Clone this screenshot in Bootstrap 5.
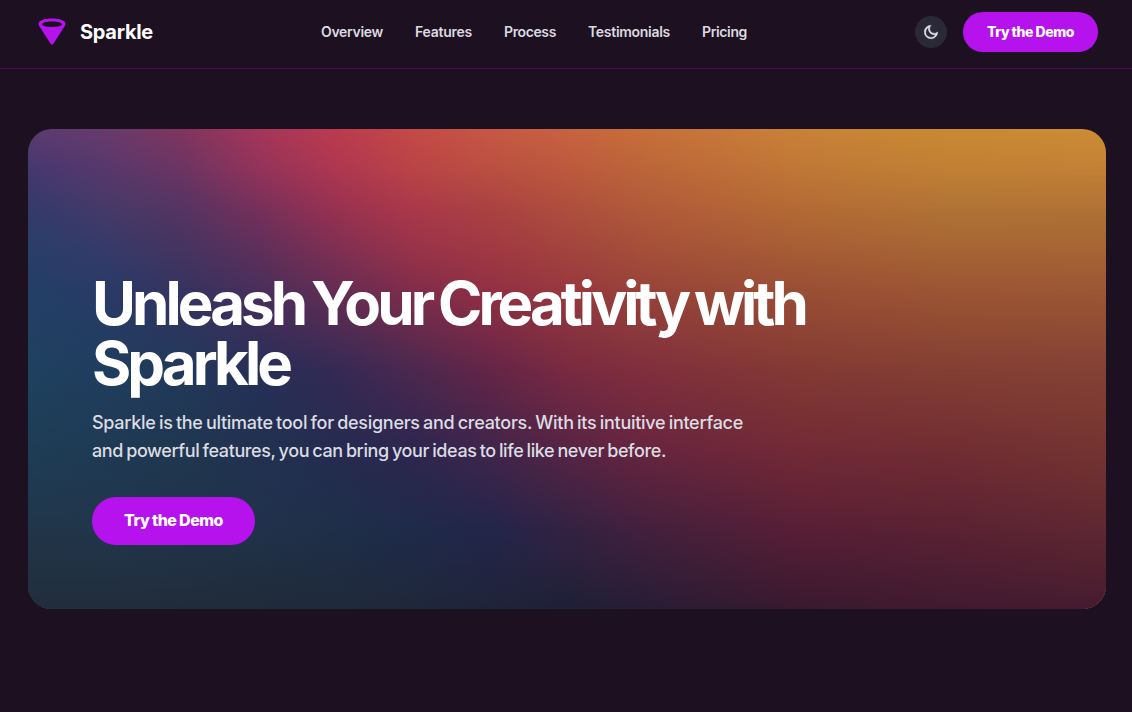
<!DOCTYPE html>
<html lang="en">
<head>
<meta charset="utf-8">
<meta name="viewport" content="width=device-width, initial-scale=1">
<title>Sparkle</title>
<link href="https://cdn.jsdelivr.net/npm/bootstrap@5.3.0/dist/css/bootstrap.min.css" rel="stylesheet">
<style>
body{background:#1d1020;color:#fff;font-family:Inter,"Open Sans",sans-serif;overflow:hidden}
.topbar{height:69px;padding:0 34px 5px 36px;border-bottom:1px solid #47104f}
.brand-name{font-size:20px;line-height:28px;font-weight:700}
.main-links{gap:32px}
.main-links a{font-size:14px;line-height:20px;font-weight:600;color:#dcdae0;text-decoration:none;white-space:nowrap}
.theme-btn{width:32px;height:32px;background:#292938;border:0;color:#e5e5ea}
.btn-demo{--bs-btn-color:#fff;--bs-btn-bg:#b612ed;--bs-btn-hover-color:#fff;--bs-btn-hover-bg:#a30fd6;--bs-btn-border-width:0;font-weight:800;word-spacing:-.3px;white-space:nowrap;display:inline-flex;align-items:center;justify-content:center;padding:0}
.btn-top{width:135px;height:40px;font-size:14px}
.btn-hero{width:163px;height:48px;font-size:16px;margin-top:32px;padding-bottom:2px}
.hero{margin:60px 26px 0 28px;height:480px;border-radius:24px;overflow:hidden;display:grid}
.hero>*{grid-area:1/1}
.hero-copy{z-index:1;padding:0 64px 64px}
h1{font-size:60px;line-height:60px;font-weight:750;word-spacing:-3.5px;width:760px}
.intro{font-size:18px;line-height:28px;font-weight:500;color:#dcdce3;word-spacing:-1.2px;white-space:nowrap}
.fit{display:inline-block;white-space:nowrap}
/* Each band fades in over the one above it, giving a smooth colour mesh. */
.band{background:linear-gradient(90deg,var(--a) 0,var(--b) 7.14%,var(--c) 14.29%,var(--d) 21.43%,var(--e) 28.57%,var(--f) 35.71%,var(--g) 42.86%,var(--h) 50%,var(--i) 57.14%,var(--j) 71.43%,var(--k) 85.71%,var(--l) 100%);-webkit-mask-image:linear-gradient(transparent var(--from),#000 var(--to));mask-image:linear-gradient(transparent var(--from),#000 var(--to))}
.band-1{--a:#5b3b72;--b:#683b6c;--c:#80355f;--d:#a5365a;--e:#bb3b4e;--f:#c44a46;--g:#c65844;--h:#c86340;--i:#c76f39;--j:#c98238;--k:#c98a33;--l:#cd8c35;-webkit-mask-image:linear-gradient(#000 20%,transparent 21%);mask-image:linear-gradient(#000 20%,transparent 21%)}
.band-1b{--from:0%;--to:8.33%;--a:#45386f;--b:#57386c;--c:#6b3562;--d:#93335a;--e:#ae3751;--f:#b94447;--g:#bb4f41;--h:#bb593e;--i:#bc653a;--j:#c07737;--k:#c08035;--l:#c28136}
.band-2{--from:8.33%;--to:16.67%;--a:#333b6b;--b:#453a68;--c:#553462;--d:#76305a;--e:#983151;--f:#aa384a;--g:#a94242;--h:#ae4e3e;--i:#b15a3a;--j:#b46a35;--k:#b07336;--l:#b07236}
.band-2b{--from:16.67%;--to:25%;--a:#293e69;--b:#353a69;--c:#453461;--d:#5f2f5a;--e:#7f2f52;--f:#98334a;--g:#a03943;--h:#a3433e;--i:#a54f3a;--j:#a75d35;--k:#a66535;--l:#a66535}
.band-3{--from:25%;--to:33.33%;--a:#233f66;--b:#2a3b66;--c:#363360;--d:#4a2f5b;--e:#662d53;--f:#812d4a;--g:#933044;--h:#98393e;--i:#98443a;--j:#9a4f35;--k:#9c5634;--l:#9c5735}
.band-4{--from:33.33%;--to:50%;--a:#1f4260;--b:#203d5f;--c:#22395b;--d:#272f58;--e:#352a55;--f:#4c284f;--g:#652547;--h:#792a41;--i:#802f3d;--j:#833a34;--k:#843f34;--l:#844135}
.band-5{--from:50%;--to:66.67%;--a:#1e3d55;--b:#1f3a54;--c:#203750;--d:#213251;--e:#252b50;--f:#2e264f;--g:#41254b;--h:#572444;--i:#68253f;--j:#732a36;--k:#712d33;--l:#753431}
.band-6{--from:66.67%;--to:83.33%;--a:#21364a;--b:#21364b;--c:#21344a;--d:#20324a;--e:#1f2f49;--f:#1f2b4a;--g:#23254a;--h:#332243;--i:#43203d;--j:#581f36;--k:#5a2233;--l:#5f2832}
.band-7{--from:83.33%;--to:100%;--a:#222d3c;--b:#222d3c;--c:#212c3b;--d:#212b3a;--e:#202a3b;--f:#1f273a;--g:#1f243a;--h:#1f2037;--i:#281d35;--j:#39192f;--k:#411a30;--l:#461b2f}
</style>
</head>
<body>
<header class="topbar d-flex align-items-center justify-content-between">
  <div class="d-flex align-items-center">
    <svg width="32" height="32" viewBox="0 0 32 32" fill="#b612ed" aria-hidden="true"><path fill-rule="evenodd" d="M16 2.6C8.3 2.6 2.5 4.7 2.5 7.7c0 .9.4 1.9 1 2.9l11.1 17.2c.7 1.1 2.1 1.1 2.8 0l11.1-17.2c.6-1 1-2 1-2.9 0-3-5.8-5.1-13.5-5.1Zm0 2.9c5.7 0 10 1.2 10 2.7s-4.3 2.7-10 2.7S6 9.7 6 8.2 10.3 5.500 16 5.500Z"/></svg>
    <span class="brand-name ms-2 ps-1"><span class="fit" data-w="73">Sparkle</span></span>
  </div>
  <nav class="main-links d-flex">
    <a href="#"><span class="fit" data-w="62">Overview</span></a>
    <a href="#"><span class="fit" data-w="57">Features</span></a>
    <a href="#"><span class="fit" data-w="52">Process</span></a>
    <a href="#"><span class="fit" data-w="82">Testimonials</span></a>
    <a href="#"><span class="fit" data-w="45">Pricing</span></a>
  </nav>
  <div class="d-flex align-items-center gap-3">
    <button class="theme-btn rounded-circle d-flex align-items-center justify-content-center p-0" aria-label="Toggle theme">
      <svg width="16" height="16" viewBox="0 0 24 24" fill="currentColor" stroke="currentColor" stroke-width=".7" aria-hidden="true"><path d="M10 7a7 7 0 0 0 12 4.900V12c0 5.523-4.477 10-10 10S2 17.523 2 12 6.477 2 12 2h.1A6.980 6.980 0 0 0 10 7Zm-6 5a8 8 0 0 0 15.062 3.762A9 9 0 0 1 8.238 4.938 7.999 7.999 0 0 0 4 12Z"/></svg>
    </button>
    <a href="#" class="btn btn-demo btn-top rounded-pill"><span class="fit" data-w="87">Try the Demo</span></a>
  </div>
</header>
<main>
  <section class="hero">
    <div class="band band-1"></div><div class="band band-1b"></div><div class="band band-2"></div><div class="band band-2b"></div><div class="band band-3"></div><div class="band band-4"></div><div class="band band-5"></div><div class="band band-6"></div><div class="band band-7"></div>
    <div class="hero-copy d-flex flex-column align-items-start justify-content-end">
      <h1 class="mb-3"><span class="fit" data-w="713">Unleash Your Creativity with</span><br><span class="fit" data-w="197">Sparkle</span></h1>
      <p class="intro mb-0"><span class="fit" data-w="651">Sparkle is the ultimate tool for designers and creators. With its intuitive interface</span><br><span class="fit" data-w="574">and powerful features, you can bring your ideas to life like never before.</span></p>
      <a href="#" class="btn btn-demo btn-hero rounded-pill"><span class="fit" data-w="99">Try the Demo</span></a>
    </div>
  </section>
</main>
<script src="https://cdn.jsdelivr.net/npm/bootstrap@5.3.0/dist/js/bootstrap.bundle.min.js"></script>
<script>
// Track each label so that it fills its intended measure.
document.querySelectorAll('.fit').forEach(function (el) {
  el.style.letterSpacing = '0px';
  var gap = (el.dataset.w - el.getBoundingClientRect().width) / el.textContent.length;
  el.style.letterSpacing = gap + 'px';
});
</script>
</body>
</html>
